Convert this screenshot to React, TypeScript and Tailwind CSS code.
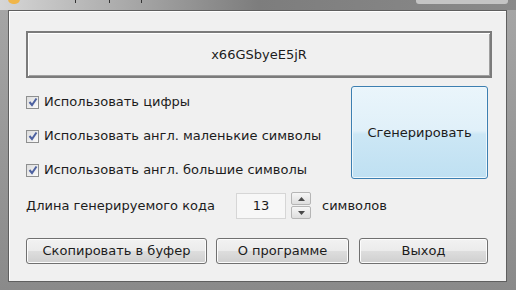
const font = { fontFamily: '"DejaVu Sans", Verdana, sans-serif' };

const CheckRow = ({ label }: { label: string }) => (
	<div className="flex h-[20px] items-center">
		<div className="flex h-[13px] w-[13px] items-center justify-center border border-[#8e8f8f] bg-gradient-to-br from-[#dcdcdc] to-[#fbfbfb]">
			<svg width="10" height="10" viewBox="0 0 10 10">
				<path d="M1.5 5 L4 8 L8.5 1.5" fill="none" stroke="#4d61a0" strokeWidth="2" />
			</svg>
		</div>
		<span className="ml-[5px] text-[13px] text-[#1c1c1c]">{label}</span>
	</div>
);

const WinButton = ({ label, w }: { label: string; w: string }) => (
	<div
		className={`${w} flex h-[26px] items-center justify-center rounded-[3px] border border-[#707070] bg-[linear-gradient(#f2f2f2_0%,#ebebeb_48%,#dddddd_52%,#cfcfcf_100%)] text-[13px] text-[#1c1c1c] shadow-[inset_0_0_0_1px_#fcfcfc]`}
	>
		{label}
	</div>
);

export default function App() {
	return (
		<div
			className="relative h-[290px] w-[516px] overflow-hidden bg-gradient-to-b from-[#a6a6a6] to-[#8a8a8a] pb-[8px] pl-[8px] pr-[9px] pt-[10px]"
			style={font}
		>
			{/* title bar remnants */}
			<div className="absolute left-0 top-0 h-[10px] w-full bg-gradient-to-r from-[#d6d6d6] via-[#7d7d7d] to-[#8a8a8a]" />
			<div className="absolute left-[8px] top-[-6px] h-[10px] w-[12px] rounded-full bg-[#f0b64a]" />
			<div className="absolute left-[416px] top-0 h-[4px] w-[92px] rounded-b-[3px] bg-[#c4c4c4]" />
			<div className="absolute left-[75px] top-0 h-[3px] w-[1px] bg-[#333]" />
			<div className="absolute left-[109px] top-0 h-[3px] w-[1px] bg-[#333]" />
			<div className="absolute left-[141px] top-0 h-[3px] w-[1px] bg-[#333]" />

			<div className="relative h-full w-full border border-[#5f5f5f] bg-[#f0f0f0] shadow-[inset_1px_1px_0_#ffffff]">
				<div className="ml-[17px] mt-[20px] flex h-[47px] w-[466px] items-center justify-center border-2 border-[#7b7b7b] bg-[#f0f0f0] text-[13px] text-[#1c1c1c] shadow-[inset_1px_1px_0_#ffffff,inset_-1px_-1px_0_#a0a0a0]">
					x66GSbyeE5jR
				</div>

				<div className="ml-[17px] mt-[8px] flex w-[462px]">
					<div className="flex flex-col gap-[14px] pt-[6px]">
						<CheckRow label="Использовать цифры" />
						<CheckRow label="Использовать англ. маленькие символы" />
						<CheckRow label="Использовать англ. большие символы" />
					</div>
					<div className="ml-auto flex h-[93px] w-[137px] items-center justify-center rounded-[3px] border border-[#3c7fb1] bg-[linear-gradient(#eaf5fb_0%,#e0f0f9_48%,#cce7f5_52%,#bfe0f2_100%)] text-[13px] text-[#1c1c1c] shadow-[inset_0_0_0_1px_#eef7fc]">
						Сгенерировать
					</div>
				</div>

				<div className="ml-[17px] mt-[12px] flex h-[27px] items-center text-[13px] text-[#1c1c1c]">
					<span className="w-[210px]">Длина генерируемого кода</span>
					<div className="flex h-[26px] w-[50px] items-center justify-center border border-[#d6d6d6] bg-[#f7f7f7]">
						13
					</div>
					<div className="ml-[5px] flex h-[27px] w-[20px] flex-col gap-[1px]">
						<div className="flex flex-1 items-center justify-center rounded-[2px] border border-[#b5b5b5] bg-gradient-to-b from-[#f6f6f6] to-[#dedede]">
							<svg width="7" height="4" viewBox="0 0 7 4">
								<path d="M0 4 L3.5 0 L7 4 Z" fill="#4a4a4a" />
							</svg>
						</div>
						<div className="flex flex-1 items-center justify-center rounded-[2px] border border-[#b5b5b5] bg-gradient-to-b from-[#f6f6f6] to-[#dedede]">
							<svg width="7" height="4" viewBox="0 0 7 4">
								<path d="M0 0 L3.5 4 L7 0 Z" fill="#4a4a4a" />
							</svg>
						</div>
					</div>
					<span className="ml-[11px]">символов</span>
				</div>

				<div className="ml-[17px] mt-[19px] flex">
					<WinButton label="Скопировать в буфер" w="w-[181px]" />
					<div className="ml-[9px]">
						<WinButton label="О программе" w="w-[133px]" />
					</div>
					<div className="ml-[10px]">
						<WinButton label="Выход" w="w-[129px]" />
					</div>
				</div>
			</div>
		</div>
	);
}
